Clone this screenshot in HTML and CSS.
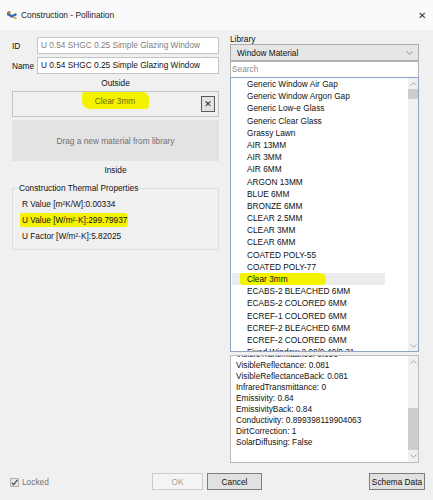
FILE: index.html
```html
<!DOCTYPE html>
<html>
<head>
<meta charset="utf-8">
<link rel="stylesheet" href="styles.css">
</head>
<body>
<div class="titlebar">
  <svg class="app-icon" viewBox="0 0 12 10" width="12" height="10">
    <path d="M1 2 L6 5 L10 3 L11 5 L6 8 L1 5 Z" fill="#3a6fb8"/>
    <circle cx="3" cy="2.5" r="1.6" fill="#b5772f"/>
    <path d="M7 6 L11 8 L9 9.5 Z" fill="#e39a3a"/>
  </svg>
  <span class="title">Construction - Pollination</span>
  <span class="close">✕</span>
</div>
<div class="content">
  <div class="left">
    <div class="field"><span class="field-label">ID</span><div class="input readonly">U 0.54 SHGC 0.25 Simple Glazing Window</div></div>
    <div class="field"><span class="field-label">Name</span><div class="input">U 0.54 SHGC 0.25 Simple Glazing Window</div></div>
    <div class="caption">Outside</div>
    <div class="layer">
      <span class="layer-name">Clear 3mm</span>
      <button class="remove">✕</button>
    </div>
    <div class="drop">Drag a new material from library</div>
    <div class="caption">Inside</div>
    <fieldset class="group">
      <legend>Construction Thermal Properties</legend>
      <div class="prop-row">R Value [m²K/W]:0.00334</div>
      <div class="prop-row"><span class="mark">U Value [W/m²·K]:299.79937</span></div>
      <div class="prop-row">U Factor [W/m²·K]:5.82025</div>
    </fieldset>
  </div>
  <div class="right">
    <div class="lib-label">Library</div>
    <div class="combo">
      <span>Window Material</span>
      <svg class="chev" viewBox="0 0 7 4" width="7" height="4"><polyline points="0.5,0.5 3.5,3.3 6.5,0.5" fill="none" stroke="#8a8a8a" stroke-width="1"/></svg>
    </div>
    <div class="search">Search</div>
    <div class="list">
      <div class="items">
        <div class="item">Generic Window Air Gap</div>
        <div class="item">Generic Window Argon Gap</div>
        <div class="item">Generic Low-e Glass</div>
        <div class="item">Generic Clear Glass</div>
        <div class="item">Grassy Lawn</div>
        <div class="item">AIR 13MM</div>
        <div class="item">AIR 3MM</div>
        <div class="item">AIR 6MM</div>
        <div class="item">ARGON 13MM</div>
        <div class="item">BLUE 6MM</div>
        <div class="item">BRONZE 6MM</div>
        <div class="item">CLEAR 2.5MM</div>
        <div class="item">CLEAR 3MM</div>
        <div class="item">CLEAR 6MM</div>
        <div class="item">COATED POLY-55</div>
        <div class="item">COATED POLY-77</div>
        <div class="item selected"><span class="mark-list">Clear 3mm</span></div>
        <div class="item">ECABS-2 BLEACHED 6MM</div>
        <div class="item">ECABS-2 COLORED 6MM</div>
        <div class="item">ECREF-1 COLORED 6MM</div>
        <div class="item">ECREF-2 BLEACHED 6MM</div>
        <div class="item">ECREF-2 COLORED 6MM</div>
        <div class="item">Fixed Window 2.00/0.40/0.31</div>
      </div>
      <div class="vscroll">
        <div class="arrow"><svg viewBox="0 0 7 4" width="7" height="4"><polyline points="0.5,3.5 3.5,0.7 6.5,3.5" fill="none" stroke="#a6a6a6" stroke-width="1"/></svg></div>
        <div class="track"><div class="thumb list-thumb"></div></div>
        <div class="arrow"><svg viewBox="0 0 7 4" width="7" height="4"><polyline points="0.5,0.5 3.5,3.3 6.5,0.5" fill="none" stroke="#a6a6a6" stroke-width="1"/></svg></div>
      </div>
    </div>
    <div class="props">
      <div class="props-text">
        <div class="pline">VisibleTransmittance: 0.898</div>
        <div class="pline">VisibleReflectance: 0.081</div>
        <div class="pline">VisibleReflectanceBack: 0.081</div>
        <div class="pline">InfraredTransmittance: 0</div>
        <div class="pline">Emissivity: 0.84</div>
        <div class="pline">EmissivityBack: 0.84</div>
        <div class="pline">Conductivity: 0.899398119904063</div>
        <div class="pline">DirtCorrection: 1</div>
        <div class="pline">SolarDiffusing: False</div>
      </div>
      <div class="vscroll props-scroll">
        <div class="arrow tall"><svg viewBox="0 0 7 4" width="7" height="4"><polyline points="0.5,3.5 3.5,0.7 6.5,3.5" fill="none" stroke="#a6a6a6" stroke-width="1"/></svg></div>
        <div class="track"><div class="thumb props-thumb"></div></div>
        <div class="arrow tall"><svg viewBox="0 0 7 4" width="7" height="4"><polyline points="0.5,0.5 3.5,3.3 6.5,0.5" fill="none" stroke="#a6a6a6" stroke-width="1"/></svg></div>
      </div>
    </div>
  </div>
</div>
<div class="footer">
  <div class="locked">
    <span class="checkbox"><svg viewBox="0 0 9 9" width="9" height="9"><polyline points="1.8,4.6 3.6,6.8 7.4,1.8" fill="none" stroke="#4a4a4a" stroke-width="1.3"/></svg></span>
    <span class="locked-text">Locked</span>
  </div>
  <button class="btn disabled">OK</button>
  <button class="btn">Cancel</button>
  <span class="spacer"></span>
  <button class="btn">Schema Data</button>
</div>
</body>
</html>
```

FILE: styles.css
```css
* { box-sizing: border-box; margin: 0; padding: 0; }
html, body { width: 433px; height: 500px; overflow: hidden; }
body {
  background: #f0f0f0;
  font-family: "Liberation Sans", Arial, sans-serif;
  font-size: 8.3px;
  color: #111;
}
.titlebar {
  height: 30px;
  background: #fafafa;
  display: flex;
  align-items: center;
  padding: 0 6px 0 6px;
}
.app-icon { margin-right: 3px; margin-top: -1px; }
.title { flex: 1; font-size: 8.4px; color: #1a1a1a; }
.close { font-size: 10px; color: #333; margin-right: 1px; }

.content { display: flex; gap: 11px; padding-left: 12px; }

.left { width: 207px; padding-top: 7px; display: flex; flex-direction: column; }
.field { display: flex; height: 17px; align-items: center; }
.field + .field { margin-top: 3px; }
.field-label { width: 25px; }
.input {
  flex: 1;
  height: 17px;
  border: 1px solid #c4c4c4;
  background: #fff;
  padding-left: 3px;
  line-height: 15px;
  white-space: nowrap;
  overflow: hidden;
}
.input.readonly { color: #808080; }
.caption { text-align: center; height: 14px; line-height: 14px; margin-top: 2px; }
.layer {
  margin-top: 1px;
  height: 26px;
  border: 1px solid #c3c3c3;
  display: grid;
  grid-template-columns: 1fr auto 1fr;
  align-items: start;
}
.layer-name {
  grid-column: 2;
  background: #f3f300;
  color: #6f6a00;
  line-height: 11px;
  padding: 4px 14px 2px 13px;
  border-radius: 2px 6px 4px 8px;
}
.remove {
  grid-column: 3;
  justify-self: end;
  width: 14px;
  height: 16px;
  margin-top: 4px;
  margin-right: 3px;
  border: 1px solid #5a5a5a;
  background: #e3e3e3;
  font-family: "DejaVu Sans", sans-serif;
  font-size: 9px;
  line-height: 14px;
  color: #222;
}
.drop {
  margin-top: 3px;
  height: 41px;
  background: #e3e3e3;
  color: #707070;
  display: flex;
  align-items: center;
  justify-content: center;
}
.group {
  margin-top: 5px;
  border: 1px solid #dddddd;
  padding: 2px 6px 5px 6px;
}
.group legend { line-height: 12px; padding: 0; }
.prop-row { line-height: 16px; padding-left: 3px; }
.mark {
  background: #f3f300;
  padding: 2px 1px 2px 2px;
  margin-left: -2px;
  border-radius: 2px 4px 3px 2px;
}

.right { width: 189px; display: flex; flex-direction: column; }
.lib-label { padding-top: 4px; line-height: 10px; height: 14px; }
.combo {
  height: 17px;
  border: 1px solid #adadad;
  background: #e6e6e6;
  display: flex;
  align-items: center;
  justify-content: space-between;
  padding: 0 5px 0 6px;
}
.search {
  height: 16px;
  border: 1px solid #b4b4b4;
  border-bottom: none;
  background: #fff;
  color: #8a8a8a;
  padding-left: 1px;
  line-height: 15px;
}
.list {
  height: 275px;
  border: 1px solid #8ea4c0;
  background: #fff;
  display: flex;
}
.items { flex: 1; overflow: hidden; }
.item { height: 12.2px; line-height: 12.2px; padding-left: 16px; white-space: nowrap; }
.item.selected { background: #ececec; margin: 0 23px 0 1px; padding-left: 15px; }
.mark-list {
  background: #f3f300;
  padding: 1px 38px 1px 7px;
  margin-left: -7px;
  border-radius: 2px 6px 4px 3px;
}
.vscroll {
  width: 10px;
  background: #f0f0f0;
  display: flex;
  flex-direction: column;
}
.arrow { height: 11px; display: flex; align-items: center; justify-content: center; }
.arrow.tall { height: 12px; }
.track { flex: 1; }
.thumb { background: #cdcdcd; }
.list-thumb { height: 10px; }
.props-thumb { margin-top: 40px; height: 42px; }

.props {
  margin-top: 3px;
  height: 108px;
  border: 1px solid #bdbdbd;
  background: #fff;
  display: flex;
}
.props-text { flex: 1; overflow: hidden; padding-left: 5px; }
.pline { line-height: 11.1px; white-space: nowrap; }
.pline:first-child { margin-top: -7.5px; }

.footer {
  margin-top: 10px;
  height: 17px;
  display: grid;
  grid-template-columns: 142px 55px 55px 1fr 56px;
  column-gap: 0;
  padding: 0 8px 0 10px;
}
.footer .btn + .btn { margin-left: 0; }
.locked { display: flex; align-items: center; padding-top: 1px; }
.checkbox {
  width: 9px; height: 9px;
  border: 1px solid #b0b0b0;
  background: #e8e8e8;
  display: flex;
  align-items: center;
  justify-content: center;
  margin-right: 3px;
}
.checkbox svg { flex: none; }
.locked-text { color: #707070; }
.btn {
  height: 17px;
  border: 1px solid #7d7d7d;
  background: #e1e1e1;
  font-family: inherit;
  font-size: 8.3px;
  color: #111;
}
.btn.disabled { border-color: #cccccc; background: #f4f4f4; color: #a3a3a3; margin-right: 4px; }
.spacer { }
```
